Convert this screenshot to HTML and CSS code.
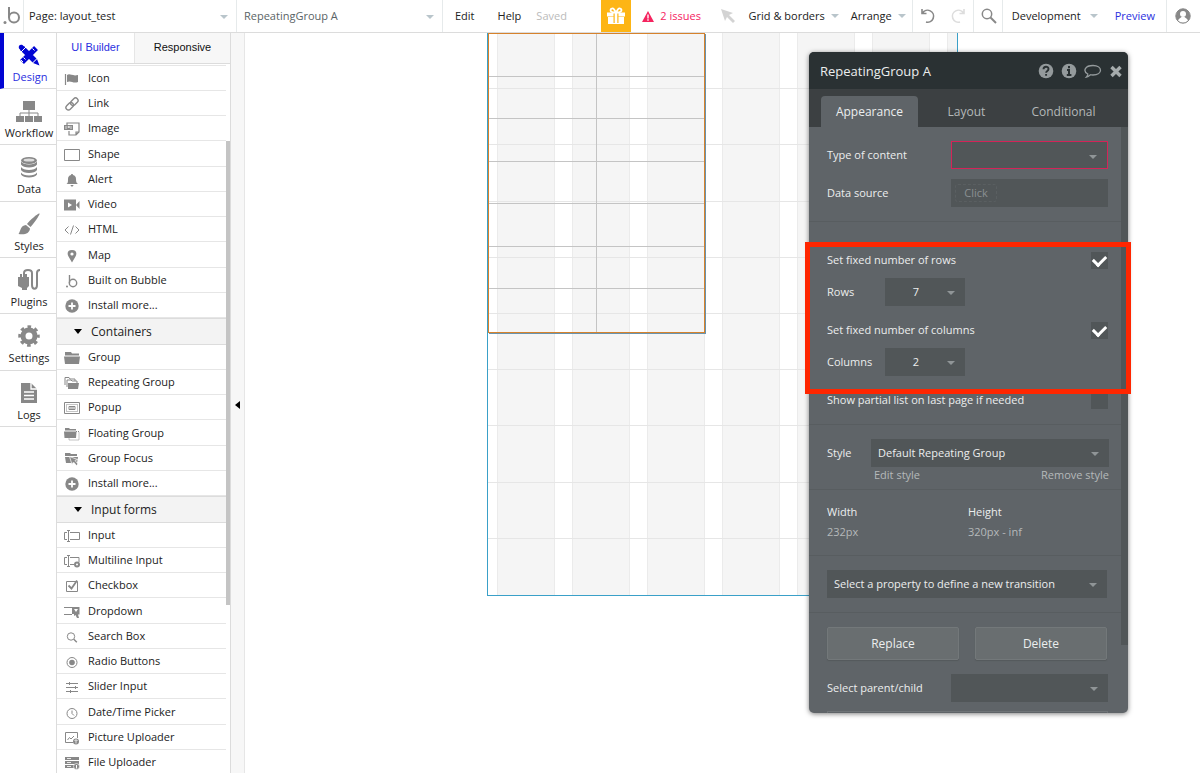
FILE: index.html
```html
<!DOCTYPE html>
<html lang="en">
<head>
  <meta charset="UTF-8">
  <title>layout_test | Editor</title>
  <link rel="stylesheet" href="styles.css">
</head>
<body>
  <header class="topbar">
    <a class="logo" href="#" aria-label="Home">
      <svg width="18" height="20" viewBox="0 0 18 20"><circle cx="2" cy="16.500" r="1.500" fill="#888"/><path d="M6 1v10.500" stroke="#888" stroke-width="2" fill="none"/><circle cx="11" cy="11.500" r="5" stroke="#888" stroke-width="2" fill="none"/></svg>
    </a>
    <div class="picker page-picker">
      <select aria-label="Page"><option>Page: layout_test</option></select>
    </div>
    <div class="picker element-picker">
      <select aria-label="Element"><option>RepeatingGroup A</option></select>
    </div>
    <button class="menu edit">Edit</button>
    <button class="menu">Help</button>
    <span class="saved">Saved</span>
    <button class="gift" aria-label="Gift">
      <svg width="20" height="18" viewBox="0 0 20 18"><g fill="#fff"><path d="M1 5.500h18v4H1zM2 10h16v7H2z"/></g><path d="M9.500 5.500C6 5.500 4.500 4.500 4.500 3S6.800.800 8 2.300L10 5.500l2-3.200C13.200.800 15.500 1.500 15.500 3s-1.500 2.500-5 2.500" fill="none" stroke="#fff" stroke-width="1.800"/><path d="M7.500 6.500h5V16h-5z" fill="#fdb515"/><path d="M8.700 6h2.600v10H8.700z" fill="#fff"/></svg>
    </button>
    <button class="issues">
      <svg width="12" height="11" viewBox="0 0 12 11"><path d="M6 0l6 11H0z" fill="#f5245f"/><path d="M6 3.500v4M6 8.300v1.400" stroke="#fff" stroke-width="1.400"/></svg>
      2 issues
    </button>
    <svg class="pointer" width="14" height="14" viewBox="0 0 14 14"><path d="M0 0l12 4-4 2 6 6-2 2-6-6-2 4z" fill="#d3d3d3"/></svg>
    <div class="tools">
      <button class="menu drop">Grid &amp; borders</button>
      <button class="menu drop arrange">Arrange</button>
      <div class="history">
        <button aria-label="Undo"><svg width="16" height="16" viewBox="0 0 16 16"><path d="M2 1v4.500h4.500M2.500 5A6 6 0 1 1 6 14" fill="none" stroke="#888" stroke-width="1.600"/></svg></button>
        <button aria-label="Redo"><svg width="16" height="16" viewBox="0 0 16 16"><path d="M14 1v4.500H9.500M13.500 5A6 6 0 1 0 10 14" fill="none" stroke="#ddd" stroke-width="1.600"/></svg></button>
      </div>
      <button class="find" aria-label="Search"><svg width="16" height="16" viewBox="0 0 16 16"><circle cx="6" cy="6" r="4.700" fill="none" stroke="#888" stroke-width="1.500"/><path d="M9.500 9.500l5.500 5.500" stroke="#888" stroke-width="2"/></svg></button>
      <button class="menu drop version">Development</button>
      <a class="preview" href="#">Preview</a>
      <button class="account" aria-label="Account"><svg width="16" height="16" viewBox="0 0 16 16"><circle cx="8" cy="8" r="7.200" fill="#888" stroke="#888"/><circle cx="8" cy="6" r="3" fill="#fff"/><path d="M3 12.500c1-2.500 3-2.500 3.500-3.500h3c.500 1 2.500 1 3.500 3.500-2.500 2.500-7.500 2.500-10 0z" fill="#fff"/></svg></button>
    </div>
  </header>

  <div class="workspace">
    <nav class="rail">
      <a class="active" href="#"><svg width="22" height="22" viewBox="0 0 22 22"><path d="M4 4l13 13M18 4L4 18" stroke="#0205d3" stroke-width="5.500"/><path d="M1 4.500C0 2 2 0 4.500 1l2 2-3.500 3.500zM15 19l4-4 2.500 6.500z" fill="#0205d3"/><path d="M3 8l5-5M14 19.500l5.500-5.500M14.500 4.500l2 2M5.500 13.500l2 2M3 16l2 2" stroke="#fff" stroke-width="1"/></svg>Design</a>
      <a href="#"><svg width="26" height="22" viewBox="0 0 26 22"><path d="M7 1h12v9H7zM0 16h8v6H0zM9 16h8v6H9zM18 16h8v6h-8z" fill="#888"/><path d="M13 10v6M4 16v-3h18v3" fill="none" stroke="#888"/></svg>Workflow</a>
      <a href="#"><svg width="18" height="22" viewBox="0 0 18 22"><g fill="#888"><ellipse cx="9" cy="4.500" rx="8" ry="3.500"/><path d="M1 5.500v3c2 4 14 4 16 0v-3c-2 4-14 4-16 0zM1 11v3c2 4 14 4 16 0v-3c-2 4-14 4-16 0zM1 16.500v2c2 4 14 4 16 0v-2c-2 4-14 4-16 0z"/></g><ellipse cx="9" cy="4" rx="5.500" ry="1.600" fill="#ddd"/></svg>Data</a>
      <a href="#"><svg width="22" height="22" viewBox="0 0 22 22"><path d="M21.500.500c1 .500-6 10.500-9 13.500L9 11C12 7 20.500-.500 21.500.500zM8 12l4 3.500c-.500 5-5 6.500-11.500 5.500C2.500 19 2 12.500 8 12z" fill="#888"/></svg>Styles</a>
      <a href="#"><svg width="24" height="22" viewBox="0 0 24 22"><path d="M1 8h11v9l-2 2v2H5v-2l-4-2zM3 5h2v4H3zM8 5h2v4H8z" fill="#888"/><path d="M7 8V4c0-4 8-4 8 0v12c0 5 5 5 5 0V4c0-2 1-3 3-3" fill="none" stroke="#888" stroke-width="2"/></svg>Plugins</a>
      <a href="#"><svg width="22" height="22" viewBox="0 0 22 22"><circle cx="11" cy="11" r="6" fill="none" stroke="#888" stroke-width="5"/><circle cx="11" cy="11" r="9" fill="none" stroke="#888" stroke-width="3.500" stroke-dasharray="3.500 3.570" stroke-dashoffset="1.750"/></svg>Settings</a>
      <a href="#"><svg width="16" height="22" viewBox="0 0 16 22"><path d="M0 1h10l6 6v14H0z" fill="#888"/><path d="M10 1v6h6M3 10h10M3 13.500h10M3 17h10" fill="none" stroke="#fff" stroke-width="1.300"/></svg>Logs</a>
    </nav>

    <aside class="palette">
      <div class="tabs">
        <button class="selected">UI Builder</button>
        <button>Responsive</button>
      </div>
      <div class="palette-scroll">
        <ul>
          <li><svg width="16" height="14" viewBox="0 0 16 14"><path d="M1.500 2v11" stroke="#888" stroke-width="1.200"/><path d="M3 3c3-2 5 1.500 11 0v7c-5 2-7-2-11 0z" fill="#888"/></svg>Icon</li>
          <li><svg width="16" height="14" viewBox="0 0 16 14"><g fill="none" stroke="#888" stroke-width="1.400" transform="rotate(-45 8 7)"><rect x="0.500" y="4.500" width="8.500" height="5" rx="2.500"/><rect x="7" y="4.500" width="8.500" height="5" rx="2.500"/></g></svg>Link</li>
          <li><svg width="16" height="14" viewBox="0 0 16 14"><path d="M3 3V1h12v9l-3 3H5V9M12 13v-3h3" fill="none" stroke="#888" stroke-width="1.200"/><path d="M0 3h9v5H0z" fill="#888"/><path d="M2 4v3M4 4.500h1.500v1H4zM7 4v3" stroke="#ddd" fill="none"/></svg>Image</li>
          <li><svg width="16" height="14" viewBox="0 0 16 14"><path d="M.500 1.500h15v11H.500z" fill="none" stroke="#888"/></svg>Shape</li>
          <li><svg width="16" height="14" viewBox="0 0 16 14"><path d="M8 1c.800 0 1 .500 1 1 2 .500 3 2 3 4 0 3 .500 4 2 5H2.500C4 10 4 9 4 6c0-2 1-3.500 3-4 0-.500.200-1 1-1zM6.500 12h3c-.500 2-2.500 2-3 0z" fill="#888"/></svg>Alert</li>
          <li><svg width="16" height="14" viewBox="0 0 16 14"><path d="M0 1.500h12v11H0zM12 7l3.500-4v8z" fill="#888"/><path d="M4 4.500v5l4-2.500z" fill="#fff"/></svg>Video</li>
          <li><svg width="16" height="14" viewBox="0 0 16 14"><path d="M4.500 3.500L1 7l3.500 3.500M11.500 3.500L15 7l-3.500 3.500M9.500 2.500l-3 9" fill="none" stroke="#888"/></svg>HTML</li>
          <li><svg width="16" height="14" viewBox="0 0 16 14"><path d="M8 1c5 0 5 4 3.500 6.500L8 13.500 4.500 7.500C3 5 3 1 8 1z" fill="#888"/><circle cx="8" cy="5" r="1.600" fill="#fff"/></svg>Map</li>
          <li><svg width="16" height="14" viewBox="0 0 16 14"><circle cx="3" cy="12.500" r="1" fill="#888"/><path d="M5.500 1v8" stroke="#888" stroke-width="1.400"/><circle cx="9" cy="9" r="3.700" fill="none" stroke="#888" stroke-width="1.400"/></svg>Built on Bubble</li>
          <li><svg width="16" height="14" viewBox="0 0 16 14"><circle cx="8" cy="7" r="6.700" fill="#888"/><path d="M8 3.500v7M4.500 7h7" stroke="#fff" stroke-width="1.800"/></svg>Install more...</li>
        </ul>
        <h2>Containers</h2>
        <ul>
          <li><svg width="16" height="14" viewBox="0 0 16 14"><path d="M1 1h6l1 1.500h7v2H1zM0 5.500h16l-1 7.500H1z" fill="#888"/></svg>Group</li>
          <li><svg width="16" height="14" viewBox="0 0 16 14"><path d="M1 9V1.500h4l1 1.500h5v2M3 11V4h4l1 1h5v2" fill="none" stroke="#888"/><path d="M4 7h11l-1 6H4z" fill="#888"/></svg>Repeating Group</li>
          <li><svg width="16" height="14" viewBox="0 0 16 14"><path d="M.500 1.500h15v11H.500z" fill="none" stroke="#888"/><path d="M2.500 3.500h11v7h-11z" fill="none" stroke="#888" stroke-dasharray="1 1"/><path d="M5 5.500h6v3H5z" fill="none" stroke="#888"/><path d="M6 7h4" stroke="#888"/></svg>Popup</li>
          <li><svg width="16" height="14" viewBox="0 0 16 14"><path d="M1 1h4l1 1h6v1.500H1zM0 4.500h12.500l-.500 6.500H.500z" fill="#888"/><path d="M12 4.500h3v8.500H5v-2" fill="none" stroke="#888" stroke-dasharray="1 1"/></svg>Floating Group</li>
          <li><svg width="16" height="14" viewBox="0 0 16 14"><path d="M1 1h5l1 1h6v2H1zM1 5h13l-1 6H2z" fill="#888"/><path d="M5.500 4.500l8 3-2.500 1 3 3.500-1.500 1.500-3-3.500L8 12.500z" fill="#888" stroke="#fff" stroke-width=".7"/></svg>Group Focus</li>
          <li><svg width="16" height="14" viewBox="0 0 16 14"><circle cx="8" cy="7" r="6.700" fill="#888"/><path d="M8 3.500v7M4.500 7h7" stroke="#fff" stroke-width="1.800"/></svg>Install more...</li>
        </ul>
        <h2>Input forms</h2>
        <ul>
          <li><svg width="16" height="14" viewBox="0 0 16 14"><path d="M3 3.500H.500v7H3M6 3.500h9.500v7H6M4.500 2v10M3 1.500h3M3 12.500h3" fill="none" stroke="#888"/></svg>Input</li>
          <li><svg width="16" height="14" viewBox="0 0 16 14"><path d="M3 3.500H.500v7H3M6 3.500h9V8M6 10.500h4M4.500 2v10M3 1.500h3M3 12.500h3" fill="none" stroke="#888"/><circle cx="13" cy="10.500" r="2" fill="#fff" stroke="#888" stroke-width="2"/></svg>Multiline Input</li>
          <li><svg width="16" height="14" viewBox="0 0 16 14"><path d="M2.500 2.500h11v10h-11z" fill="none" stroke="#888"/><path d="M4.500 6.500l3 3 5.500-8" fill="none" stroke="#888" stroke-width="1.800"/></svg>Checkbox</li>
          <li><svg width="16" height="14" viewBox="0 0 16 14"><path d="M0 2.500h10M0 9.500h8" stroke="#888"/><path d="M8 2h7.500v7.500H14l1 3.500h-2l-1.500-3-1.500 1V9H8z" fill="#888"/><path d="M10 4h4l-2 3z" fill="#fff"/></svg>Dropdown</li>
          <li><svg width="16" height="14" viewBox="0 0 16 14"><circle cx="7" cy="6.500" r="3.700" fill="none" stroke="#888"/><path d="M9.800 9.300l3 3" stroke="#888" stroke-width="1.400"/></svg>Search Box</li>
          <li><svg width="16" height="14" viewBox="0 0 16 14"><circle cx="8" cy="7.500" r="5" fill="none" stroke="#888"/><circle cx="8" cy="7.500" r="2.800" fill="#888"/></svg>Radio Buttons</li>
          <li><svg width="16" height="14" viewBox="0 0 16 14"><path d="M2 3.500h12M2 7.500h12M2 11.500h12M5.500 2v3M11.500 6v3M6.500 10v3" stroke="#888"/></svg>Slider Input</li>
          <li><svg width="16" height="14" viewBox="0 0 16 14"><circle cx="8" cy="7.500" r="5" fill="none" stroke="#888"/><path d="M8 4.500v3l2 2" fill="none" stroke="#888"/></svg>Date/Time Picker</li>
          <li><svg width="16" height="14" viewBox="0 0 16 14"><path d="M9 11.500H1.500v-10h12V7M3.500 9l2-2.500L7 8l3-3" fill="none" stroke="#888"/><circle cx="12" cy="10.500" r="3" fill="#888"/><path d="M12 12.500V9M10.500 10L12 8.500l1.500 1.500" stroke="#fff" fill="none" stroke-width=".8"/></svg>Picture Uploader</li>
          <li><svg width="16" height="14" viewBox="0 0 16 14"><path d="M1 1h14v3H1zM1 5h14v3H1zM1 9h9v3H1z" fill="#888"/><path d="M3 2.500h4M3 6.500h4M3 10.500h4" stroke="#fff" stroke-width=".8"/><circle cx="12.500" cy="10.500" r="3" fill="#888" stroke="#fff" stroke-width=".6"/><path d="M12.500 12.500V9" stroke="#fff"/></svg>File Uploader</li>
        </ul>
      </div>
    </aside>
    <button class="collapse" aria-label="Collapse palette"></button>

    <main class="canvas">
      <div class="page">
        <div class="page-columns"><i></i><i></i><i></i><i></i><i></i><i></i><i></i></div>
        <div class="page-rows"><i></i><i></i><i></i><i></i><i></i><i></i><i></i><i></i><i></i><i></i></div>
        <div class="repeating-group"><i></i><i></i><i></i><i></i><i></i><i></i><i></i><i></i><i></i><i></i><i></i><i></i><i></i><i></i></div>
      </div>

      <section class="editor">
        <div class="editor-box">
          <header class="editor-title">
            <h1>RepeatingGroup A</h1>
            <button aria-label="Help"><svg width="16" height="16" viewBox="0 0 16 16"><circle cx="8" cy="8" r="7.300" fill="#949a9c"/><path d="M5.500 6.300c0-3.300 5-3.300 5-.300 0 2-2.400 1.800-2.400 3.800M8.100 10.900v1.900" fill="none" stroke="#2a3133" stroke-width="1.900"/></svg></button>
            <button aria-label="Info"><svg width="16" height="16" viewBox="0 0 16 16"><circle cx="8" cy="8" r="7.300" fill="#949a9c"/><path d="M8 3v2.300M6 7h2v5M5.800 12h4.600" fill="none" stroke="#2a3133" stroke-width="2"/></svg></button>
            <button aria-label="Comment"><svg width="18" height="16" viewBox="0 0 18 16"><path d="M9 2.500c10 0 10 9.500 0 9.500-1 0-2 0-2.500-.300C5 13 4 13.800 2.500 14c1-1 1.300-2 1.300-3C-1.500 8 1 2.500 9 2.500z" fill="none" stroke="#949a9c" stroke-width="1.300"/></svg></button>
            <button aria-label="Close"><svg width="14" height="16" viewBox="0 0 14 16"><path d="M2.500 4l9 9M11.500 4l-9 9" stroke="#a5abac" stroke-width="3.400"/></svg></button>
          </header>
          <div class="editor-tabs">
            <button class="selected">Appearance</button>
            <button>Layout</button>
            <button>Conditional</button>
          </div>
          <div class="editor-body">
            <div class="fields source">
              <div class="field">
                <label for="content-type">Type of content</label>
                <div class="dropdown medium invalid"><select id="content-type"><option></option></select></div>
              </div>
              <div class="field">
                <label for="data-source">Data source</label>
                <div class="expression"><button id="data-source">Click</button></div>
              </div>
            </div>
            <div class="fields sizing">
              <div class="field check"><label for="fixed-rows">Set fixed number of rows</label><input type="checkbox" id="fixed-rows" checked></div>
              <div class="field count"><label for="rows">Rows</label><div class="dropdown small"><select id="rows"><option>7</option></select></div></div>
              <div class="field check"><label for="fixed-columns">Set fixed number of columns</label><input type="checkbox" id="fixed-columns" checked></div>
              <div class="field count"><label for="columns">Columns</label><div class="dropdown small"><select id="columns"><option>2</option></select></div></div>
              <div class="field check"><label for="partial">Show partial list on last page if needed</label><input type="checkbox" id="partial"></div>
            </div>
            <div class="fields style">
              <div class="field">
                <label for="style">Style</label>
                <div class="dropdown large"><select id="style"><option>Default Repeating Group</option></select></div>
              </div>
              <div class="style-links"><a href="#">Edit style</a><a href="#">Remove style</a></div>
            </div>
            <dl class="fields measures">
              <div><dt>Width</dt><dd>232px</dd></div>
              <div><dt>Height</dt><dd>320px - inf</dd></div>
            </dl>
            <div class="fields transition">
              <div class="dropdown"><select aria-label="Transition"><option>Select a property to define a new transition</option></select></div>
            </div>
            <div class="fields actions">
              <div class="buttons"><button>Replace</button><button>Delete</button></div>
              <div class="field">
                <label for="relative">Select parent/child</label>
                <div class="dropdown medium"><select id="relative"><option></option></select></div>
              </div>
              <button class="more" aria-label="More"></button>
            </div>
            <div class="thumb"></div>
          </div>
        </div>
        <div class="highlight"></div>
      </section>
    </main>
  </div>
</body>
</html>
```
FILE: styles.css
```css
:root {
  --line: #dcdcdc;
  --blue: #0205d3;
  --panel: #5f6468;
  --field: #515658;
  --panel-text: #eceeee;
}

* {
  box-sizing: border-box;
}

body {
  margin: 0;
  height: 100vh;
  display: flex;
  flex-direction: column;
  overflow: hidden;
  background: #fff;
  color: #222;
  font: 11px/16px "Open Sans", "Noto Sans", sans-serif;
}

button, select {
  font: inherit;
  color: inherit;
  background: none;
  border: none;
  margin: 0;
  padding: 0;
}

a {
  color: inherit;
  text-decoration: none;
}

svg {
  display: block;
  flex: none;
}

/* top bar */

.topbar {
  display: flex;
  align-items: center;
  flex: none;
  height: 33px;
  border-bottom: 1px solid var(--line);
  white-space: nowrap;
}

.topbar > * {
  flex: none;
}

.logo {
  width: 24px;
  height: 32px;
  padding: 6px 3px;
  border-right: 1px solid #e6eaeb;
}

.picker {
  position: relative;
  height: 32px;
  border-right: 1px solid #e6eaeb;
}

.picker select {
  appearance: none;
  width: 100%;
  height: 32px;
  padding-left: 5px;
}

.page-picker {
  width: 213px;
}

.element-picker {
  width: 206px;
  color: #5a6466;
}

.element-picker select {
  padding-left: 7px;
}

.picker::after,
.drop::after,
.dropdown::after {
  content: "";
  border: 4px solid transparent;
  border-top-color: #b9c5cb;
  border-bottom: none;
}

.picker::after {
  position: absolute;
  top: 15px;
  right: 8px;
}

.menu {
  margin-right: 23px;
}

.edit {
  margin-left: 12px;
}

.topbar .saved {
  margin-left: -8px;
  width: 65px;
  color: #bbb;
}

.gift {
  width: 30px;
  height: 32px;
  padding: 0 5px;
  background: #fdb515;
}

.issues {
  display: flex;
  align-items: center;
  gap: 6px;
  margin-left: 11px;
  color: #f5245f;
}

.pointer {
  margin-left: 20px;
}

.tools {
  display: flex;
  align-items: center;
  margin-left: auto;
}

.drop {
  display: flex;
  align-items: center;
  gap: 6px;
  margin-right: 12px;
}

.arrange {
  margin-right: 6px;
}

.history {
  display: flex;
  align-items: center;
  gap: 14px;
  width: 62px;
  height: 32px;
  padding-left: 7px;
  border: solid #e6eaeb;
  border-width: 0 1px;
}

.find {
  width: 29px;
  height: 32px;
  padding-left: 7px;
  border-right: 1px solid #e6eaeb;
}

.version {
  gap: 9px;
  margin: 0 17px 0 9px;
}

.preview {
  color: #2b2fe0;
}

.account {
  width: 34px;
  height: 32px;
  margin-left: 11px;
  padding-left: 8px;
  border-left: 1px solid #e6eaeb;
}

/* left side */

.workspace {
  display: flex;
  flex: 1;
  min-height: 0;
}

.rail {
  flex: none;
  width: 57px;
  border-right: 1px solid var(--line);
}

.rail a {
  display: flex;
  flex-direction: column;
  align-items: center;
  gap: 3px;
  height: 56px;
  padding: 11px 0 0 2px;
  border-bottom: 1px solid var(--line);
}

.rail a:nth-child(3n) {
  height: 57px;
}

.rail a.active {
  padding-left: 0;
  border-left: 4px solid var(--blue);
  color: #2b2fe0;
}

.rail .active svg {
  margin-right: 3px;
}

.palette {
  display: flex;
  flex-direction: column;
  flex: none;
  width: 174px;
  border-right: 1px solid var(--line);
}

.palette .tabs {
  display: flex;
  flex: none;
  height: 31px;
  border-bottom: 1px solid var(--line);
}

.tabs button {
  width: 96px;
  padding-bottom: 2px;
  background: #f7f7f7;
  border-left: 1px solid #e6e6e6;
  font-family: "Liberation Sans", Arial, sans-serif;
  color: #111;
}

.tabs .selected {
  width: 77px;
  background: #fff;
  border: none;
  color: #2b2fe0;
}

.palette-scroll {
  position: relative;
  flex: 1;
  overflow: hidden;
  padding: 1px 4px 0 0;
}

.palette-scroll::after {
  content: "";
  position: absolute;
  top: 77px;
  right: 0;
  width: 4px;
  height: 464px;
  background: #c4c4c4;
}

.palette ul {
  list-style: none;
  margin: 0;
  padding: 0;
}

.palette ul:first-child {
  border-top: 1px solid #e6e6e6;
}

.palette li {
  display: flex;
  align-items: center;
  gap: 8px;
  height: 25px;
  padding-left: 7px;
  border-bottom: 1px solid #e6e6e6;
}

.palette li:nth-child(4n) {
  height: 26px;
}

.palette li svg {
  margin-top: 2px;
}

.palette h2 {
  display: flex;
  align-items: center;
  gap: 9px;
  height: 27px;
  margin: 0;
  padding-left: 17px;
  background: #f3f3f3;
  border: solid var(--line);
  border-width: 1px 0;
  font-size: 12px;
  font-weight: 400;
}

.palette h2::before {
  content: "";
  border: 4px solid transparent;
  border-top: 5px solid #000;
  border-bottom: none;
}

.collapse {
  flex: none;
  width: 14px;
  padding: 4px 0 0 4px;
  background: #f7f7f7;
  border-right: 1px solid #e6e6e6;
}

.collapse::before {
  content: "";
  display: block;
  width: 0;
  border: 4px solid transparent;
  border-right: 5px solid #000;
  border-left: none;
}

/* canvas */

.canvas {
  position: relative;
  flex: 1;
  overflow: hidden;
}

.page {
  position: relative;
  width: 471px;
  height: 563px;
  margin-left: 242px;
  border: 1px solid #3aa0c8;
  border-top: none;
}

.page-columns {
  display: flex;
  gap: 17px;
  height: 100%;
  padding-left: 9px;
  overflow: hidden;
}

.page-columns i {
  flex: none;
  width: 58px;
  background: #f5f5f5;
  border: solid #ebebeb;
  border-width: 0 1px;
}

.page-rows {
  position: absolute;
  inset: 0;
  display: grid;
  grid-auto-rows: 1fr;
}

.page-rows i {
  border-bottom: 1px solid #e6e6e6;
}

.page-rows i:last-child {
  border: none;
}

.repeating-group {
  position: absolute;
  top: 0;
  left: 0;
  width: 217px;
  height: 300px;
  display: grid;
  grid-template-columns: 1fr 1fr;
  grid-auto-rows: 1fr;
  border: 1px solid #d6822c;
  box-shadow: 1px 1px 0 #6a93ad;
}

.repeating-group i {
  border: solid #c4c4c4;
  border-width: 0 1px 1px 0;
}

.repeating-group i:nth-child(2n) {
  border-right: none;
}

.repeating-group i:nth-last-child(-n+2) {
  border-bottom: none;
}

/* property editor floats over the canvas */

.editor {
  position: absolute;
  top: 19px;
  right: 72px;
  width: 319px;
  color: var(--panel-text);
}

.editor-box {
  height: 661px;
  border-radius: 5px;
  overflow: hidden;
  background: var(--panel);
  box-shadow: 0 1px 5px rgba(0, 0, 0, 0.5);
}

.editor-title {
  display: flex;
  align-items: center;
  gap: 7px;
  height: 37px;
  padding: 0 5px 0 11px;
  background: #2a3133;
}

.editor-title h1 {
  flex: 1;
  margin: 0;
  font-size: 13px;
  font-weight: 400;
}

.editor-tabs {
  display: flex;
  height: 38px;
  padding: 7px 16px 0 12px;
  background: #3c4042;
  font-size: 12px;
}

.editor-tabs button {
  flex: 1;
  color: #b4b8b9;
  border-radius: 4px 4px 0 0;
}

.editor-tabs .selected {
  background: var(--panel);
  color: var(--panel-text);
}

.editor-body {
  position: relative;
  padding-right: 7px;
}

.thumb {
  position: absolute;
  top: 0;
  right: 0;
  width: 7px;
  height: 518px;
  background: var(--field);
}

.fields {
  margin: 0;
  padding: 14px 13px 14px 18px;
  border-bottom: 1px solid #585d60;
}

.field {
  display: flex;
  align-items: center;
  justify-content: space-between;
}

.source .field + .field {
  margin-top: 10px;
}

.dropdown {
  position: relative;
  height: 28px;
  background: var(--field);
}

.dropdown select {
  display: block;
  appearance: none;
  width: 100%;
  height: 100%;
  padding: 0 24px 0 7px;
}

.dropdown::after {
  position: absolute;
  top: 13px;
  right: 10px;
  border-top-color: #909597;
}

.medium {
  width: 157px;
}

.large {
  width: 238px;
}

.small {
  width: 80px;
}

.small select {
  padding: 0 18px 0 0;
  text-align: center;
  text-align-last: center;
}

.invalid {
  border: 1px solid #d42458;
}

.expression {
  width: 157px;
  height: 28px;
  padding: 5px 4px;
  background: var(--field);
}

.expression button {
  width: 42px;
  height: 18px;
  border: 1px dashed #5a5f61;
  border-radius: 3px;
  color: #8b9092;
}

.sizing {
  padding-top: 30px;
  padding-bottom: 15px;
}

.sizing .check {
  height: 17px;
}

.check label {
  padding-bottom: 2px;
}

.count {
  justify-content: flex-start;
  margin: 9px 0 16px;
}

.count label {
  width: 58px;
}

.check input {
  appearance: none;
  display: grid;
  place-items: center;
  width: 17px;
  height: 17px;
  margin: 0;
  padding: 0 0 3px;
  background: var(--field);
}

.check input:checked::before {
  content: "";
  width: 10px;
  height: 6px;
  border: solid #fff;
  border-width: 0 0 3px 3px;
  transform: rotate(-45deg);
}

.style {
  padding-right: 12px;
  padding-bottom: 6px;
}

.style-links {
  display: flex;
  justify-content: space-between;
  padding-left: 47px;
  color: #b5b9ba;
}

.measures {
  display: flex;
  padding-bottom: 15px;
}

.measures div {
  width: 141px;
  flex: none;
}

.measures dd {
  margin: 4px 0 0;
  color: #b5b9ba;
}

.transition {
  padding-right: 14px;
}

.actions {
  border: none;
  padding-bottom: 0;
}

.buttons {
  display: flex;
  gap: 16px;
  margin: 0 1px 14px 0;
  font-size: 12px;
}

.buttons button {
  flex: 1;
  height: 33px;
  background: #696e70;
  border: 1px solid #73787a;
  border-radius: 2px;
  box-shadow: 0 1px 1px #55595c;
}

.more {
  display: block;
  width: 100%;
  height: 33px;
  margin-top: 9px;
  border: 1px solid #6f7477;
}

.highlight {
  position: absolute;
  top: 190px;
  left: -4px;
  right: -3px;
  height: 152px;
  border: 5px solid #ff2600;
}
```
